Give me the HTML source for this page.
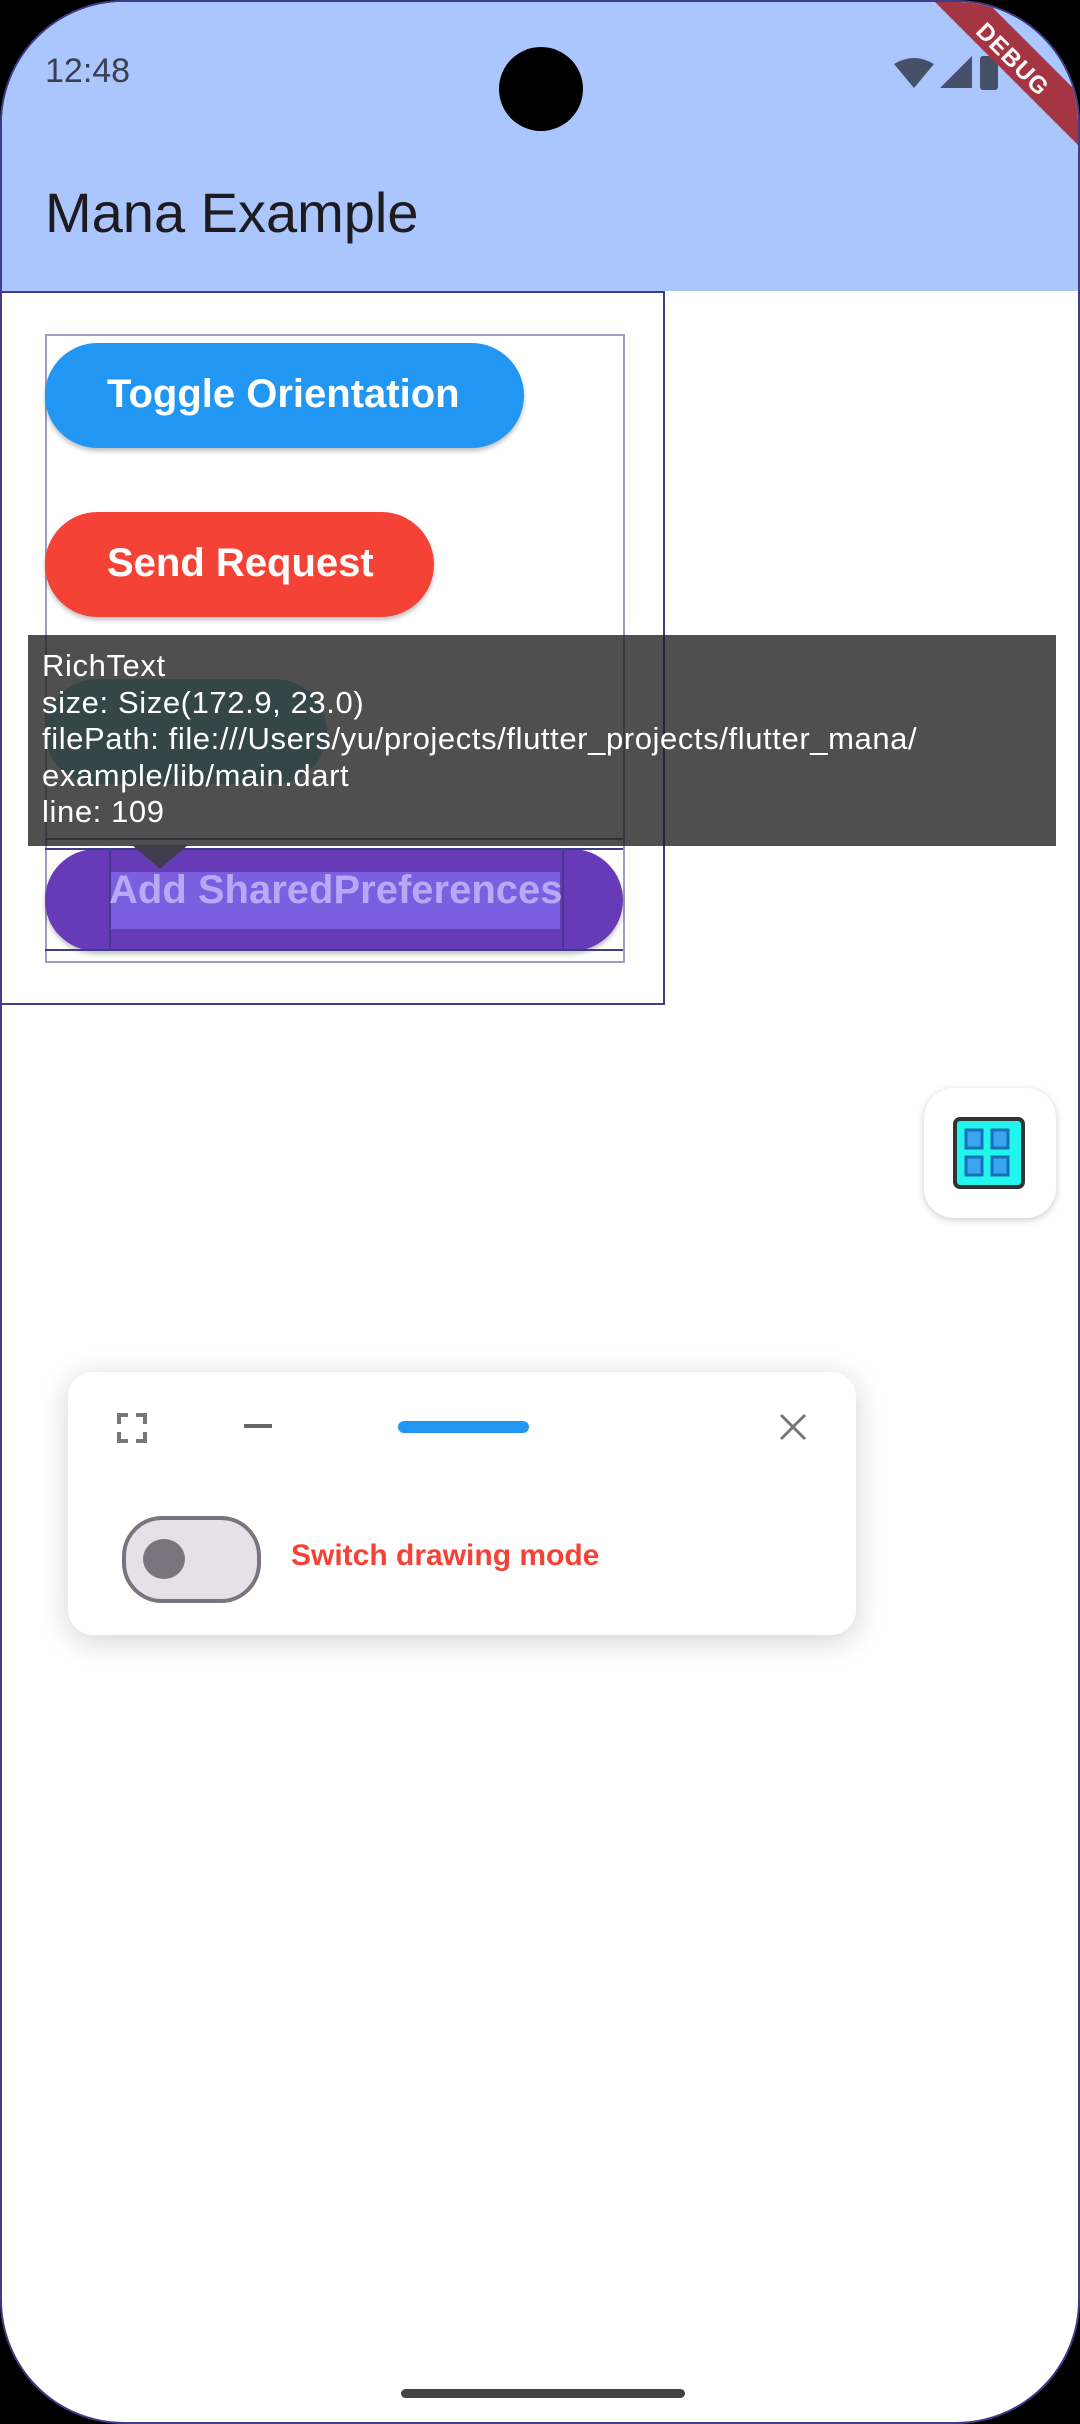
<!DOCTYPE html>
<html><head><meta charset="utf-8"><style>
html,body{margin:0;padding:0;background:#000;}
body{width:1080px;height:2424px;position:relative;overflow:hidden;font-family:"Liberation Sans",Roboto,sans-serif;}
.screen{position:absolute;left:0;top:0;width:1076px;height:2420px;border:2px solid #3f3d8a;border-radius:124px;background:#fff;overflow:hidden;}
.abs{position:absolute;}
.appbar{left:0;top:0;width:1080px;height:289px;background:#abc5fd;}
.btn{position:absolute;border-radius:60px;color:#fff;font-weight:bold;font-size:40px;box-shadow:0 3px 5px rgba(0,0,0,.25);}
</style></head><body>
<div class="screen">
 <div class="abs appbar"></div>
 <div class="abs" style="left:43px;top:50px;font-size:34px;color:#3a3f52;">12:48</div>
 <div class="abs" style="left:497px;top:45px;width:84px;height:84px;border-radius:50%;background:#000;"></div>
 <svg class="abs" style="left:880px;top:40px" width="200" height="60">
  <path d="M12 22 Q32 10 52 22 L32 46 Z" fill="#465068"/>
  <path d="M58 46 L90 14 L90 46 Z" fill="#465068"/>
  <rect x="98" y="14" width="18" height="34" rx="3" fill="#465068"/>
 </svg>
 <svg class="abs" style="left:0;top:0" width="1080" height="200">
  <polygon points="933,0 985,0 1080,95 1080,147" fill="#a53542"/>
 </svg>
 <div class="abs" style="left:955px;top:44px;width:110px;text-align:center;transform:rotate(45deg);color:#fff;font-weight:bold;font-size:24px;letter-spacing:1px;">DEBUG</div>
 <div class="abs" style="left:43px;top:178px;font-size:56px;color:#1d1b20;">Mana Example</div>

 <div class="abs" style="left:0;top:289px;width:661px;height:710px;border:2px solid #3f3d8a;border-left:none;"></div>
 <div class="abs" style="left:43px;top:332px;width:576px;height:625px;border:2px solid #a09cc0;"></div>
 <div class="btn" style="left:43px;top:341px;width:479px;height:105px;background:#2196f3;"><span class="abs" style="left:62px;top:29px">Toggle Orientation</span></div>
 <div class="btn" style="left:43px;top:510px;width:389px;height:105px;background:#f44336;"><span class="abs" style="left:62px;top:29px">Send Request</span></div>
 <div class="btn" style="left:43px;top:677px;width:282px;height:105px;background:rgb(135,215,225);box-shadow:none;"></div>

 <div class="btn" style="left:43px;top:847px;width:578px;height:102px;background:#673ab7;"></div>
 <div class="abs" style="left:107px;top:870px;width:451px;height:57px;background:#7b5fe0;"></div>
 <div class="abs" style="left:107px;top:847px;width:451px;height:100px;border-left:2px solid #4a3590;border-right:2px solid #4a3590;"></div>
 <div class="abs" style="left:107px;top:866px;font-size:40px;font-weight:bold;color:#b9a8f5;">Add SharedPreferences</div>
 <div class="abs" style="left:43px;top:836px;width:578px;height:8px;border-top:2px solid #7a78a0;border-bottom:2px solid #3f3d8a;"></div>
 <div class="abs" style="left:43px;top:947px;width:578px;height:10px;border-top:2px solid #3f3d8a;"></div>

 <div class="abs" style="left:26px;top:633px;width:1028px;height:211px;background:rgba(30,30,30,.78);"></div>
 <svg class="abs" style="left:130px;top:843px" width="56" height="26"><polygon points="0,0 56,0 28,24" fill="#3f3d4d"/></svg>
 <div class="abs" style="left:40px;top:646px;font-size:31px;letter-spacing:0.6px;line-height:36.5px;color:#fff;">RichText<br>size: Size(172.9, 23.0)<br>filePath: file:///Users/yu/projects/flutter_projects/flutter_mana/<br>example/lib/main.dart<br>line: 109</div>

 <div class="abs" style="left:922px;top:1086px;width:132px;height:130px;border-radius:30px;background:#fff;box-shadow:0 2px 8px rgba(0,0,0,.2);"></div>
 <svg class="abs" style="left:950px;top:1114px" width="76" height="76">
  <rect x="3" y="3" width="68" height="68" rx="5" fill="#22f5ee" stroke="#333" stroke-width="4"/>
  <rect x="14" y="14" width="16" height="18" fill="#39a4f0" stroke="#1870b8" stroke-width="3"/>
  <rect x="40" y="14" width="16" height="18" fill="#39a4f0" stroke="#1870b8" stroke-width="3"/>
  <rect x="14" y="41" width="16" height="18" fill="#39a4f0" stroke="#1870b8" stroke-width="3"/>
  <rect x="40" y="41" width="16" height="18" fill="#39a4f0" stroke="#1870b8" stroke-width="3"/>
 </svg>

 <div class="abs" style="left:66px;top:1370px;width:788px;height:263px;border-radius:25px;background:#fff;box-shadow:0 6px 30px rgba(0,0,0,.18);"></div>
 <svg class="abs" style="left:114px;top:1410px" width="32" height="32" fill="none" stroke="#777" stroke-width="4">
  <path d="M3 12V3h9M20 3h9v9M29 20v9h-9M12 29H3v-9"/>
 </svg>
 <div class="abs" style="left:242px;top:1422px;width:28px;height:4px;background:#666;"></div>
 <div class="abs" style="left:396px;top:1419px;width:131px;height:12px;border-radius:6px;background:#2196f3;"></div>
 <svg class="abs" style="left:776px;top:1410px" width="30" height="30" stroke="#777" stroke-width="3"><path d="M3 3L27 27M27 3L3 27"/></svg>
 <div class="abs" style="left:120px;top:1514px;width:131px;height:79px;border-radius:40px;background:#e6e0e8;border:4px solid #79747e;"></div>
 <div class="abs" style="left:141px;top:1537px;width:42px;height:40px;border-radius:50%;background:#79747e;"></div>
 <div class="abs" style="left:289px;top:1537px;font-size:30px;font-weight:bold;color:#f44336;">Switch drawing mode</div>

 <div class="abs" style="left:399px;top:2387px;width:284px;height:9px;border-radius:5px;background:#444;"></div>
</div>
</body></html>
